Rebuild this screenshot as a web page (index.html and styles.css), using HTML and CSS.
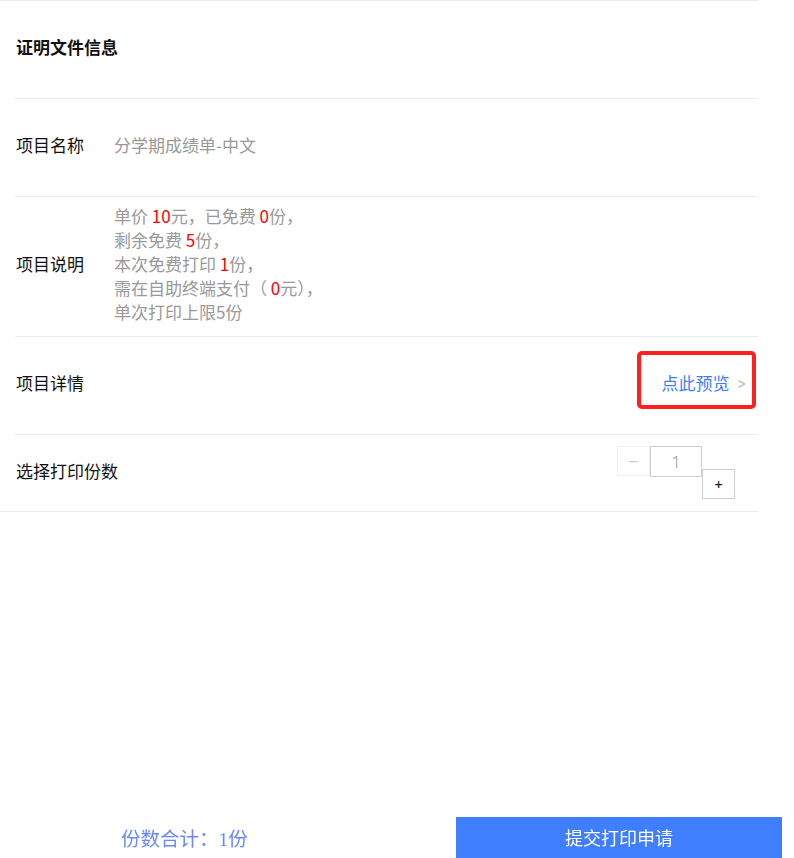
FILE: index.html
```html
<!DOCTYPE html>
<html lang="zh-CN">
  <head>
    <meta charset="UTF-8" />
    <meta name="viewport" content="width=device-width, initial-scale=1.0" />
    <title>证明文件信息</title>
    <link rel="stylesheet" href="styles.css">
  </head>
  <body>
    <div class="info">
      <div class="info-title">证明文件信息</div>
      <div class="row row-name">
        <span class="label">项目名称</span>
        <span class="value">分学期成绩单-中文</span>
      </div>
      <div class="row row-desc">
        <span class="label">项目说明</span>
        <div class="value">
          <p>单价 <em>10</em>元，已免费 <em>0</em>份，</p>
          <p>剩余免费 <em>5</em>份，</p>
          <p>本次免费打印 <em>1</em>份，</p>
          <p>需在自助终端支付（ <em>0</em>元），</p>
          <p>单次打印上限5份</p>
        </div>
      </div>
      <div class="row row-detail">
        <span class="label">项目详情</span>
        <a class="preview" href="#">点此预览<span class="chevron">&gt;</span></a>
      </div>
      <div class="row row-count">
        <span class="label">选择打印份数</span>
        <div class="stepper">
          <span class="step-btn minus">−</span>
          <input class="step-input" type="text" value="1" />
          <span class="step-btn plus">+</span>
        </div>
      </div>
    </div>

    <div class="footer">
      <div class="total">份数合计：1份</div>
      <button class="submit-btn">提交打印申请</button>
    </div>
  </body>
</html>
```

FILE: styles.css
```css
body {
  margin: 0;
  padding: 0;
  background-color: #fff;
  font-family: "Noto Sans CJK SC", "Noto Sans", sans-serif;
  color: #111;
}

.info {
  width: 758px;
  border-top: 1px solid #ececec;
  border-bottom: 1px solid #ececec;
}

.info-title {
  box-sizing: border-box;
  height: 97px;
  padding: 0 0 6px 16px;
  display: flex;
  align-items: center;
  font-size: 17px;
  font-weight: bold;
}

.row {
  box-sizing: border-box;
  margin-left: 15px;
  padding: 0 0 6px 1px;
  border-top: 1px solid #ececec;
  display: flex;
  align-items: center;
  font-size: 17px;
}

.row .label {
  width: 98px;
  flex-shrink: 0;
  white-space: nowrap;
}

.row .value {
  color: #999;
}

.row-name {
  height: 98px;
}

.row-desc {
  height: 140px;
}

.row-desc p {
  margin: 0;
  line-height: 24px;
}

.row-desc em {
  font-style: normal;
  color: #f00;
}

.row-detail {
  height: 98px;
  justify-content: space-between;
}

.preview {
  position: relative;
  margin-right: 12px;
  color: #3f7ef6;
  text-decoration: none;
  display: flex;
  align-items: center;
}

/* red annotation box */
.preview::after {
  content: "";
  position: absolute;
  left: -25px;
  right: -10px;
  top: -19px;
  bottom: -14px;
  border: 4px solid #ff1f1f;
  border-radius: 5px;
}

.chevron {
  margin-left: 7px;
  color: #c4c4c4;
  font-size: 16px;
  font-weight: bold;
  transform: scaleX(0.8);
}

.row-count {
  height: 77px;
  justify-content: space-between;
}

.stepper {
  align-self: flex-start;
  margin-top: 11px;
  margin-right: 23px;
  display: flex;
  align-items: flex-start;
}

.step-btn {
  width: 31px;
  height: 28px;
  display: flex;
  align-items: center;
  justify-content: center;
  border: 1px solid #cfcfcf;
  color: #222;
  font-size: 12px;
  font-family: "DejaVu Sans", sans-serif;
}

.minus {
  border-color: #efefef;
  color: #ccc;
  font-size: 14px;
}

.plus {
  margin-top: 23px;
  font-weight: bold;
  font-size: 11px;
}

.step-input {
  box-sizing: border-box;
  width: 52px;
  height: 31px;
  margin: 0;
  padding: 0;
  border: 1px solid #cfcfcf;
  text-align: center;
  font-size: 17px;
  color: #999;
  font-family: "Noto Sans", sans-serif;
  font-weight: 300;
  outline: none;
}

.footer {
  position: fixed;
  left: 0;
  bottom: 0;
  width: 782px;
  height: 41px;
  display: flex;
}

.total {
  width: 456px;
  box-sizing: border-box;
  padding-left: 121px;
  display: flex;
  align-items: center;
  font-family: "Liberation Serif", "Noto Sans CJK SC", serif;
  font-size: 19.5px;
  color: #6b88ff;
}

.submit-btn {
  flex: 1;
  border: none;
  margin: 0;
  padding: 0 0 2px;
  background-color: #3f7fff;
  color: #fff;
  font-size: 18px;
  font-family: "Noto Sans CJK SC", sans-serif;
}
```
